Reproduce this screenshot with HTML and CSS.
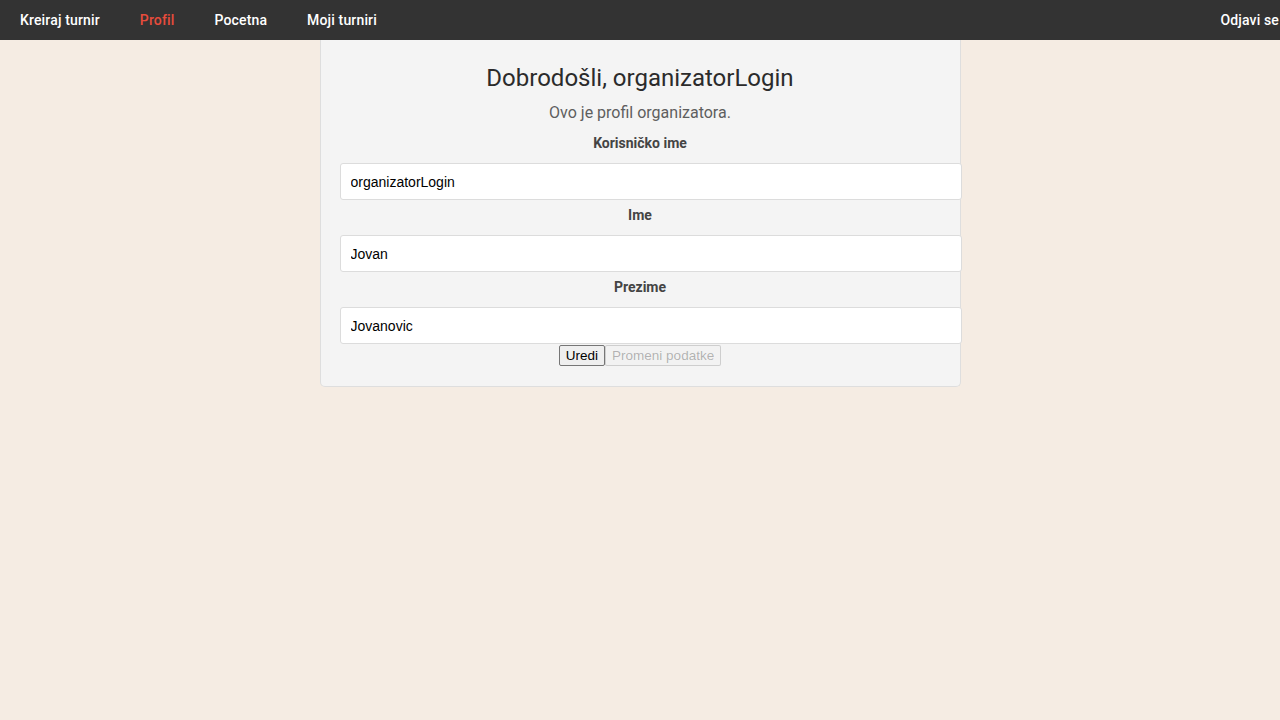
FILE: index.html
```html
<!DOCTYPE html>
<html lang="sr">
<head>
<meta charset="utf-8">
<title>Profil</title>
<link rel="stylesheet" href="styles.css">
</head>
<body>
<nav class="topnav">
  <a class="nav-link" href="#">Kreiraj turnir</a>
  <a class="nav-link active" href="#">Profil</a>
  <a class="nav-link" href="#">Pocetna</a>
  <a class="nav-link" href="#">Moji turniri</a>
  <a class="nav-link logout" href="#">Odjavi se</a>
</nav>
<main class="card">
  <h2 class="title">Dobrodošli, organizatorLogin</h2>
  <p class="subtitle">Ovo je profil organizatora.</p>
  <label class="field-label">Korisničko ime</label>
  <input class="field-input" type="text" value="organizatorLogin" readonly>
  <label class="field-label">Ime</label>
  <input class="field-input" type="text" value="Jovan" readonly>
  <label class="field-label">Prezime</label>
  <input class="field-input" type="text" value="Jovanovic" readonly>
  <div class="actions">
    <button class="btn" type="button">Uredi</button><button class="btn" type="button" disabled>Promeni podatke</button>
  </div>
</main>
</body>
</html>
```
FILE: styles.css
```css
html, body {
  margin: 0;
  padding: 0;
  overflow-x: hidden;
}
body {
  background: #f5ece3;
  font-family: Roboto, "Liberation Sans", sans-serif;
  width: 1280px;
  min-height: 720px;
}
.topnav {
  display: flex;
  align-items: center;
  height: 40px;
  background: #333333;
}
.nav-link {
  display: block;
  padding: 0 20px;
  line-height: 40px;
  color: #ffffff;
  text-decoration: none;
  font-size: 14px;
  font-weight: 500;
  letter-spacing: 0.15px;
}
.nav-link.active {
  color: #e74c3c;
}
.nav-link.logout {
  margin-left: auto;
  margin-right: -19px;
}
.card {
  box-sizing: border-box;
  width: 641px;
  margin: 0 auto;
  padding: 24px 20px 20px 20px;
  background: #f4f4f4;
  border: 1px solid #dedede;
  border-top: none;
  border-radius: 0 0 5px 5px;
  text-align: center;
}
.title {
  margin: 0 0 10px;
  font-size: 24px;
  font-weight: 400;
  line-height: 29px;
  color: #2b2b2b;
}
.subtitle {
  margin: 0 0 13px;
  font-size: 16px;
  line-height: 19px;
  color: #5e5e5e;
}
.field-label {
  display: block;
  margin: 7px 0 11px;
  font-size: 14px;
  font-weight: 700;
  line-height: 17px;
  color: #444444;
}
.field-input {
  display: block;
  box-sizing: border-box;
  width: 622px;
  height: 37px;
  margin: 0 0 0 -1px;
  padding: 0 10px;
  border: 1px solid #dcdcdc;
  border-radius: 3px;
  background: #ffffff;
  font-family: "Liberation Sans", Arial, sans-serif;
  font-size: 14px;
  color: #000000;
  outline: none;
}
.actions {
  display: flex;
  justify-content: center;
  margin-top: 1px;
}
.btn {
  font-family: "Liberation Sans", Arial, sans-serif;
  font-size: 13.5px;
  height: 21px;
  padding: 1px 6px;
  background: #efefef;
  border: 1px solid #767676;
  border-radius: 2px;
  color: #000000;
}
.btn:disabled {
  color: rgba(16, 16, 16, 0.3);
  border-color: rgba(118, 118, 118, 0.3);
  background: rgba(239, 239, 239, 0.3);
}
```
